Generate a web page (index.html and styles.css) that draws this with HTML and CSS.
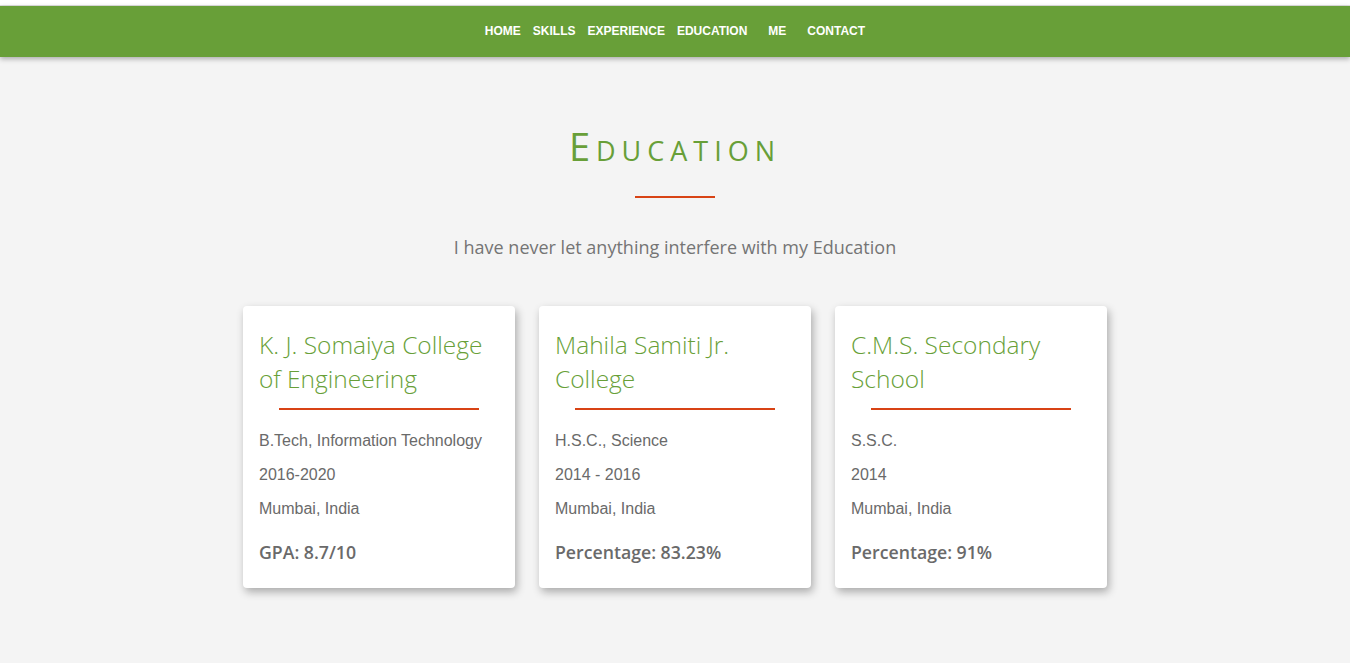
FILE: index.html
```html
<!DOCTYPE html>
<html lang="en">
<head>
<meta charset="utf-8">
<title>Education</title>
<link rel="stylesheet" href="styles.css">
</head>
<body>
<div class="page">
  <nav class="navbar">
    <ul class="nav-list">
      <li><a href="#">Home</a></li>
      <li><a href="#">Skills</a></li>
      <li><a href="#">Experience</a></li>
      <li><a href="#">Education</a></li>
      <li class="spaced"><a href="#">Me</a></li>
      <li class="spaced"><a href="#">Contact</a></li>
    </ul>
  </nav>
  <section class="education">
    <h1 class="section-title">Education</h1>
    <div class="title-rule"></div>
    <p class="section-sub">I have never let anything interfere with my Education</p>
    <div class="cards">
      <div class="card">
        <h2 class="card-title">K. J. Somaiya College of Engineering</h2>
        <div class="card-rule"></div>
        <p class="card-line">B.Tech, Information Technology</p>
        <p class="card-line">2016-2020</p>
        <p class="card-line">Mumbai, India</p>
        <p class="card-score">GPA: 8.7/10</p>
      </div>
      <div class="card">
        <h2 class="card-title">Mahila Samiti Jr. College</h2>
        <div class="card-rule"></div>
        <p class="card-line">H.S.C., Science</p>
        <p class="card-line">2014 - 2016</p>
        <p class="card-line">Mumbai, India</p>
        <p class="card-score">Percentage: 83.23%</p>
      </div>
      <div class="card">
        <h2 class="card-title">C.M.S. Secondary School</h2>
        <div class="card-rule"></div>
        <p class="card-line">S.S.C.</p>
        <p class="card-line">2014</p>
        <p class="card-line">Mumbai, India</p>
        <p class="card-score">Percentage: 91%</p>
      </div>
    </div>
  </section>
</div>
</body>
</html>
```

FILE: styles.css
```css
html, body {
  margin: 0;
  padding: 0;
  background: #ffffff;
}
body {
  font-family: "Liberation Sans", Arial, sans-serif;
}
.page {
  margin-top: 5px;
  background: #f4f4f4;
  min-height: 658px;
  border-top: 1px solid #e0e0e0;
}
.navbar {
  height: 51px;
  background: #689f38;
  box-shadow: 0 2px 5px rgba(0, 0, 0, 0.3);
  display: flex;
  align-items: center;
  justify-content: center;
  padding-bottom: 3px;
  box-sizing: border-box;
}
.nav-list {
  list-style: none;
  margin: 0;
  padding: 0;
  display: flex;
}
.nav-list li {
  padding: 0 6px;
}
.nav-list li.spaced {
  padding-left: 15px;
}
.nav-list a {
  color: #ffffff;
  text-decoration: none;
  text-transform: uppercase;
  font-family: "Liberation Sans", Arial, sans-serif;
  font-weight: bold;
  font-size: 12px;
}
.education {
  display: flex;
  flex-direction: column;
  align-items: center;
  padding-top: 65px;
}
.section-title {
  margin: 0;
  font-family: "Open Sans", "Noto Sans", sans-serif;
  font-weight: 400;
  font-variant: small-caps;
  font-size: 38px;
  letter-spacing: 6px;
  color: #689f38;
  line-height: 48px;
}
.title-rule {
  width: 80px;
  height: 2px;
  background: #d84315;
  margin-top: 26px;
}
.section-sub {
  margin: 38px 0 0;
  font-family: "Open Sans", "Noto Sans", sans-serif;
  font-size: 18px;
  line-height: 23px;
  color: #757575;
}
.cards {
  display: flex;
  gap: 24px;
  margin-top: 47px;
}
.card {
  width: 272px;
  height: 282px;
  box-sizing: border-box;
  background: #ffffff;
  border-radius: 4px;
  box-shadow: 2px 4px 8px rgba(0, 0, 0, 0.3);
  padding: 22px 16px 0;
  display: flex;
  flex-direction: column;
}
.card-title {
  margin: 0;
  font-family: "Open Sans", "Noto Sans", sans-serif;
  font-weight: 300;
  font-size: 24.5px;
  line-height: 34px;
  color: #689f38;
}
.card-rule {
  width: 200px;
  height: 2px;
  background: #d84315;
  align-self: center;
  margin-top: 12px;
}
.card-line {
  margin: 0;
  font-size: 16px;
  line-height: 34px;
  color: #6a6a6a;
}
.card-rule + .card-line {
  margin-top: 14px;
}
.card-score {
  margin: 9px 0 0;
  font-family: "Open Sans", "Noto Sans", sans-serif;
  font-weight: 600;
  font-size: 17.7px;
  line-height: 34px;
  color: #6a6a6a;
}
```
